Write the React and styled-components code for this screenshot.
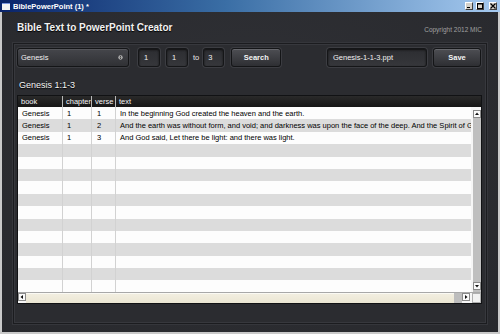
import React from "react";
import styled, { createGlobalStyle } from "styled-components";

const Global = createGlobalStyle`
  html, body { margin: 0; padding: 0; background: #2b2c30; }
  body { width: 500px; height: 334px; overflow: hidden; font-family: "Liberation Sans", Arial, sans-serif; }
`;

const Window = styled.div`
  width: 500px;
  height: 334px;
  box-sizing: border-box;
  display: flex;
  flex-direction: column;
  border-left: 2px solid #c9c9c9;
  border-right: 2px solid #c9c9c9;
  border-bottom: 2px solid #c9c9c9;
  background: #2b2c30;
`;

const TitleBar = styled.div`
  height: 12px;
  flex: none;
  margin: 0 -2px;
  display: flex;
  align-items: center;
  gap: 3px;
  padding: 0 3px 0 2px;
  background: linear-gradient(to right, #0a246a 0%, #3a6ea5 45%, #a6caf0 100%);
  color: #fff;
  font-size: 7.5px;
  font-weight: bold;
`;

const AppIcon = styled.span`
  width: 8px;
  height: 6px;
  background: #f4f4f4;
  border-top: 1px solid #7a96df;
`;

const TitleText = styled.span`
  flex: 1;
  white-space: nowrap;
`;

const WinBtn = styled.span`
  width: 8px;
  height: 8px;
  box-sizing: border-box;
  background: #d4d0c8;
  border: 1px solid;
  border-color: #fff #404040 #404040 #fff;
  display: flex;
  align-items: center;
  justify-content: center;
  margin-left: ${(p) => (p.$gap ? 2 : 0)}px;
`;

const Client = styled.div`
  flex: 1;
  display: flex;
  flex-direction: column;
  padding: 0 11px 8px 11px;
  background: radial-gradient(ellipse at 50% 40%, #303136 0%, #28292d 100%);
`;

const Header = styled.div`
  height: 31px;
  flex: none;
  display: flex;
  align-items: center;
  justify-content: space-between;
  padding: 0 5px 0 4px;
`;

const AppTitle = styled.h1`
  margin: 0;
  font-size: 10px;
  font-weight: bold;
  color: #f2f2f2;
  text-shadow: 0 1px 1px #000;
`;

const Copyright = styled.span`
  font-size: 6.5px;
  color: #a0a0a0;
  margin-top: 4px;
`;

const Panel = styled.div`
  flex: 1;
  display: flex;
  flex-direction: column;
  padding: 4px 5px 0 3px;
  border: 1px solid #1b1c1f;
  box-shadow: inset 0 0 0 1px #37383d, 0 0 0 1px #35363b;
  background: #2b2c30;
`;

const Controls = styled.div`
  height: 19px;
  display: flex;
  align-items: center;
`;

const Select = styled.div`
  width: 112px;
  height: 19px;
  box-sizing: border-box;
  border: 1px solid #141517;
  border-radius: 3px;
  background: linear-gradient(#45464b, #303135);
  box-shadow: inset 0 1px 0 #55565b, 0 0 0 1px #3b3c41;
  display: flex;
  align-items: center;
  justify-content: space-between;
  padding: 0 5px 0 3px;
  color: #f0f0f0;
  font-size: 7.5px;
`;

const Field = styled.div`
  width: ${(p) => p.$w}px;
  height: 19px;
  box-sizing: border-box;
  margin-left: ${(p) => p.$ml || 0}px;
  border: 1px solid #151618;
  border-radius: 3px;
  background: linear-gradient(#2c2d31, #36373b);
  box-shadow: inset 0 1px 2px #111, 0 0 0 1px #3c3d42;
  display: flex;
  align-items: center;
  padding-left: ${(p) => p.$pl || 5}px;
  color: #f0f0f0;
  font-size: 7.5px;
`;

const To = styled.span`
  margin-left: 5px;
  color: #e8e8e8;
  font-size: 7.5px;
`;

const Button = styled.button`
  width: ${(p) => p.$w}px;
  height: 19px;
  margin-left: ${(p) => p.$ml || 0}px;
  padding: 0;
  border: 1px solid #141517;
  border-radius: 3px;
  background: linear-gradient(#4d4e53, #2e2f33);
  box-shadow: inset 0 1px 0 #66676c, 0 0 0 1px #3b3c41;
  color: #f4f4f4;
  font-family: "Liberation Sans", Arial, sans-serif;
  font-size: 7.5px;
  font-weight: bold;
`;

const Spacer = styled.div`
  flex: 1;
`;

const Ref = styled.div`
  margin-top: 12px;
  height: 12px;
  padding-left: 2px;
  font-size: 9px;
  color: #f4f4f4;
  text-shadow: 0 1px 1px #000;
  display: flex;
  align-items: center;
`;

const Table = styled.div`
  margin-top: 4px;
  width: 465px;
  height: 209px;
  box-sizing: border-box;
  border: 1px solid #111214;
  display: flex;
  flex-direction: column;
  background: #fff;
  font-size: 7.5px;
`;

const Cols = `44px 29px 24px 1fr`;

const HeadRow = styled.div`
  height: 11px;
  flex: none;
  display: grid;
  grid-template-columns: ${Cols} 10px;
  background: linear-gradient(#2a2a2a, #161616);
  color: #f4f4f4;
`;

const HeadCell = styled.div`
  display: flex;
  align-items: center;
  padding-left: 3px;
  border-left: ${(p) => (p.$first ? "none" : "1px solid #b8b8b8")};
`;

const Body = styled.div`
  flex: 1;
  display: flex;
  min-height: 0;
`;

const Rows = styled.div`
  flex: 1;
  overflow: hidden;
`;

const Row = styled.div`
  height: 12.4px;
  display: grid;
  grid-template-columns: ${Cols};
  background: ${(p) => (p.$alt ? "#dcdcdc" : "#fdfdfd")};
  color: #000;
`;

const Cell = styled.div`
  display: flex;
  align-items: center;
  padding-left: ${(p) => p.$pl || 4}px;
  white-space: nowrap;
  overflow: hidden;
  border-left: ${(p) => (p.$first ? "none" : "1px solid #d2d2d2")};
`;

const VScroll = styled.div`
  width: 8px;
  flex: none;
  border-left: 2px solid #f6f6f6;
  background: #bfbfbf;
  display: flex;
  flex-direction: column;
  justify-content: space-between;
  padding: 3px 0 2px;
  box-shadow: inset 0 3px 0 #f6f6f6;
`;

const Arrow = styled.div`
  width: 8px;
  height: 8px;
  box-sizing: border-box;
  background: #fafafa;
  border: 1px solid #8a8a8a;
  display: flex;
  align-items: center;
  justify-content: center;
  flex: none;
`;

const HScrollRow = styled.div`
  height: 10px;
  flex: none;
  display: flex;
  border-top: 1px solid #a8a8a8;
  background: #f6f6f6;
`;

const HTrack = styled.div`
  flex: 1;
  display: flex;
`;

const Thumb = styled.div`
  flex: 1;
  background: linear-gradient(#f2eee0, #ebe6d3);
  border-top: 1px solid #fbfaf4;
`;

const TrackRest = styled.div`
  width: 8px;
  background: #bdbdbd;
`;

const Corner = styled.div`
  width: 9px;
  margin-left: 2px;
  background: #f2f2f2;
  border: 1px solid #b0b0b0;
  box-sizing: border-box;
`;

const Tri = ({ dir }) => {
  const pts = {
    up: "1,4 5,4 3,1.5",
    down: "1,2 5,2 3,4.5",
    left: "4,1 4,5 1.5,3",
    right: "2,1 2,5 4.5,3",
  }[dir];
  return (
    <svg width="6" height="6" viewBox="0 0 6 6">
      <polygon points={pts} fill="#111" />
    </svg>
  );
};

const data = [
  ["Genesis", "1", "1", "In the beginning God created the heaven and the earth."],
  [
    "Genesis",
    "1",
    "2",
    "And the earth was without form, and void; and darkness was upon the face of the deep. And the Spirit of God moved upon the face of the waters.",
  ],
  ["Genesis", "1", "3", "And God said, Let there be light: and there was light."],
];

export default function App() {
  const rows = Array.from({ length: 15 }, (_, i) => data[i] || ["", "", "", ""]);
  return (
    <>
      <Global />
      <Window>
        <TitleBar>
          <AppIcon />
          <TitleText>BiblePowerPoint (1) *</TitleText>
          <WinBtn>
            <svg width="6" height="6" viewBox="0 0 6 6">
              <rect x="1" y="4" width="3" height="1" fill="#000" />
            </svg>
          </WinBtn>
          <WinBtn>
            <svg width="6" height="6" viewBox="0 0 6 6">
              <rect x="0.5" y="0.5" width="5" height="5" fill="none" stroke="#000" strokeWidth="1" />
              <rect x="0.5" y="0.5" width="5" height="1" fill="#000" />
            </svg>
          </WinBtn>
          <WinBtn $gap>
            <svg width="6" height="6" viewBox="0 0 6 6">
              <path d="M0.5 0.5 L5.5 5.5 M5.5 0.5 L0.5 5.5" stroke="#000" strokeWidth="1.2" />
            </svg>
          </WinBtn>
        </TitleBar>
        <Client>
          <Header>
            <AppTitle>Bible Text to PowerPoint Creator</AppTitle>
            <Copyright>Copyright 2012 MIC</Copyright>
          </Header>
          <Panel>
            <Controls>
              <Select>
                <span>Genesis</span>
                <svg width="5" height="5" viewBox="0 0 6 6">
                  <circle cx="3" cy="3" r="2.6" fill="#bdbdbd" />
                  <polygon points="3,1 4.3,2.6 1.7,2.6" fill="#333" />
                  <polygon points="3,5 4.3,3.4 1.7,3.4" fill="#333" />
                </svg>
              </Select>
              <Field $w={22} $ml={9}>1</Field>
              <Field $w={22} $ml={6}>1</Field>
              <To>to</To>
              <Field $w={21} $ml={4} $pl={4}>3</Field>
              <Button $w={50} $ml={7}>Search</Button>
              <Spacer />
              <Field $w={100}>Genesis-1-1-3.ppt</Field>
              <Button $w={48} $ml={6}>Save</Button>
            </Controls>
            <Ref>Genesis 1:1-3</Ref>
            <Table>
              <HeadRow>
                <HeadCell $first>book</HeadCell>
                <HeadCell>chapter</HeadCell>
                <HeadCell>verse</HeadCell>
                <HeadCell>text</HeadCell>
                <span />
              </HeadRow>
              <Body>
                <Rows>
                  {rows.map((r, i) => (
                    <Row key={i} $alt={i % 2 === 1}>
                      <Cell $first>{r[0]}</Cell>
                      <Cell>{r[1]}</Cell>
                      <Cell $pl={5}>{r[2]}</Cell>
                      <Cell>{r[3]}</Cell>
                    </Row>
                  ))}
                </Rows>
                <VScroll>
                  <Arrow>
                    <Tri dir="up" />
                  </Arrow>
                  <Arrow>
                    <Tri dir="down" />
                  </Arrow>
                </VScroll>
              </Body>
              <HScrollRow>
                <HTrack>
                  <Arrow>
                    <Tri dir="left" />
                  </Arrow>
                  <Thumb />
                  <TrackRest />
                  <Arrow>
                    <Tri dir="right" />
                  </Arrow>
                </HTrack>
                <Corner />
              </HScrollRow>
            </Table>
          </Panel>
        </Client>
      </Window>
    </>
  );
}
